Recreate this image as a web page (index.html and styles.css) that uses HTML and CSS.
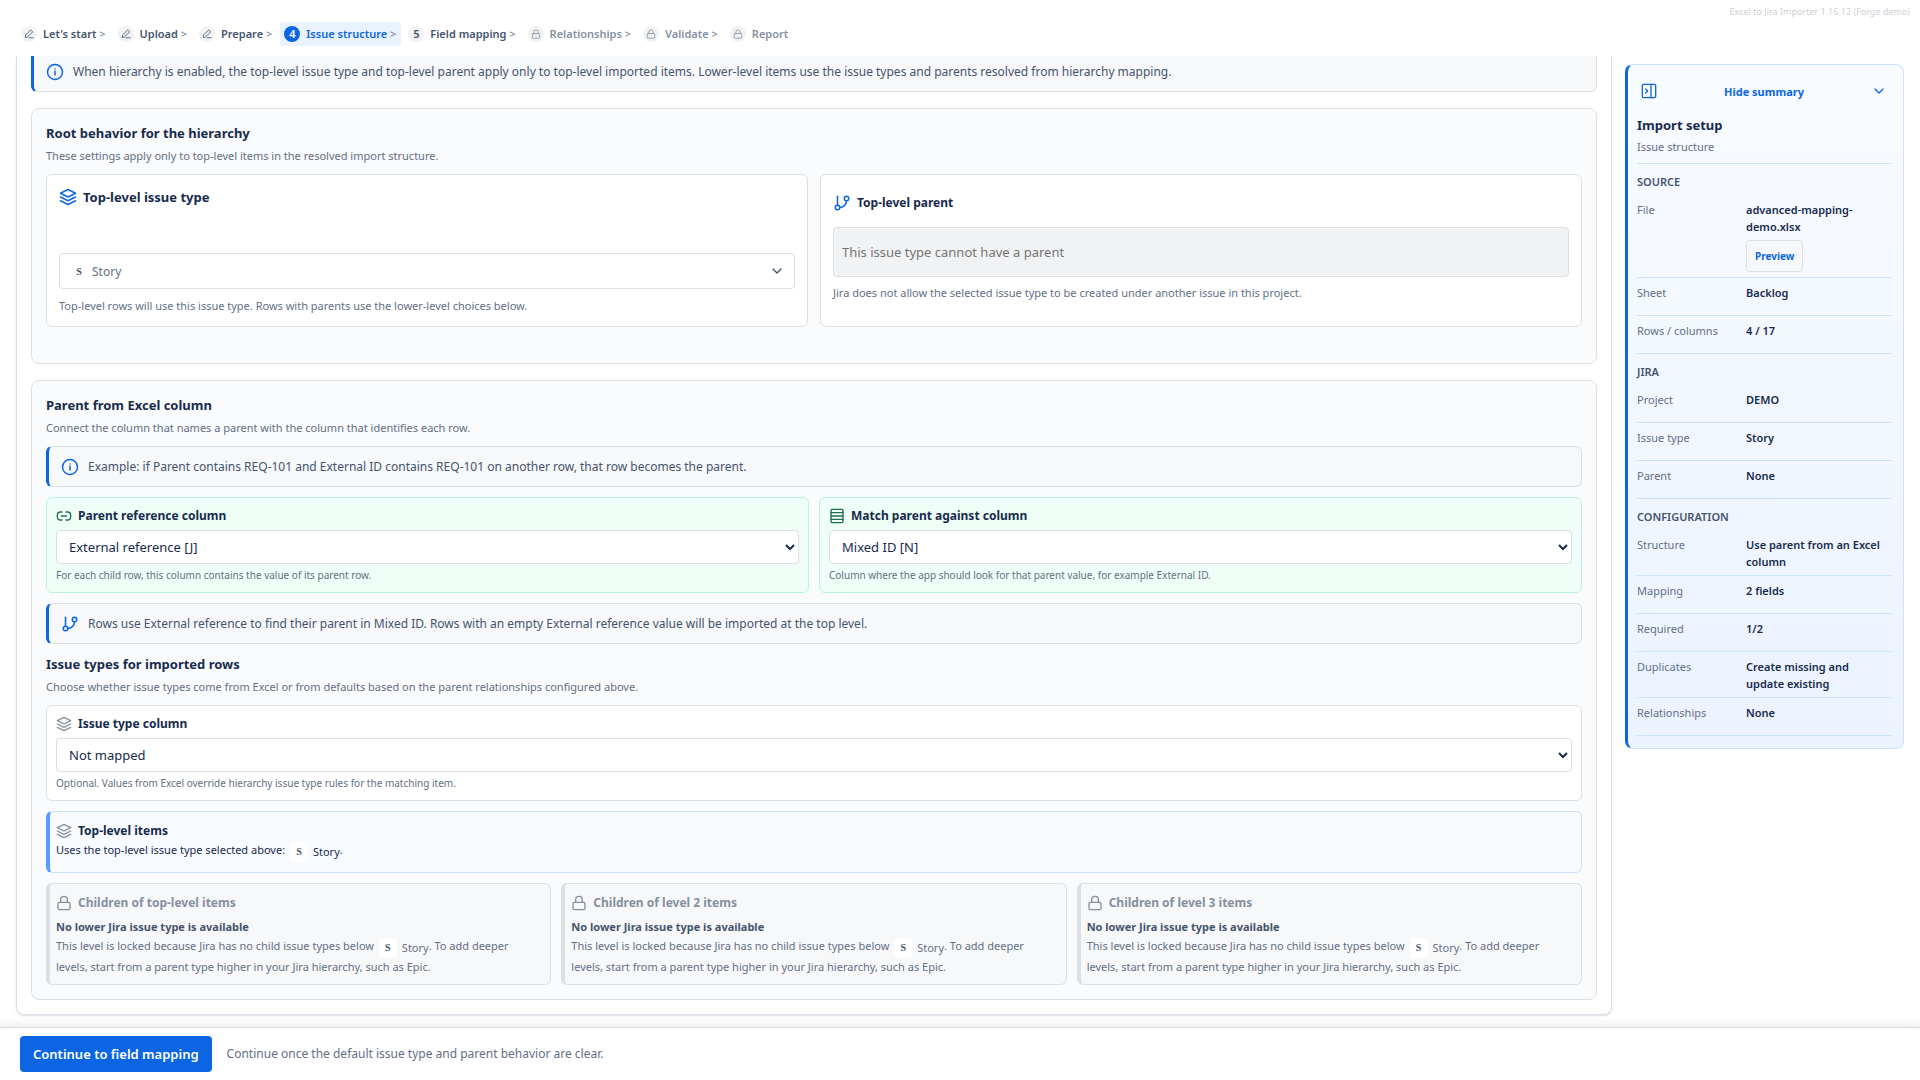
FILE: index.html
```html
<!DOCTYPE html>
<html lang="en">
<head>
    <meta charset="UTF-8">
    <meta name="viewport" content="width=device-width, initial-scale=1.0">
    <title>Excel to Jira Importer</title>
    <link rel="stylesheet" href="styles.css">
</head>
<body>
    <!-- Shared icons -->
    <svg class="sprite" aria-hidden="true">
        <symbol id="i-info" viewBox="0 0 24 24"><circle cx="12" cy="12" r="10"/><path d="M12 16v-5M12 8h.01"/></symbol>
        <symbol id="i-layers" viewBox="0 0 24 24"><path d="M12 2 2 7l10 5 10-5-10-5z"/><path d="m2 12 10 5 10-5"/><path d="m2 17 10 5 10-5"/></symbol>
        <symbol id="i-branch" viewBox="0 0 24 24"><path d="M6 3v12"/><circle cx="18" cy="6" r="3"/><circle cx="6" cy="18" r="3"/><path d="M18 9a9 9 0 0 1-9 9"/></symbol>
        <symbol id="i-lock" viewBox="0 0 24 24"><rect x="3" y="11" width="18" height="11" rx="2"/><path d="M7 11V7a5 5 0 0 1 10 0v4"/></symbol>
        <symbol id="i-link" viewBox="0 0 24 24"><path d="M9 18H7a5 5 0 0 1-5-5v-2a5 5 0 0 1 5-5h2M15 6h2a5 5 0 0 1 5 5v2a5 5 0 0 1-5 5h-2M8 12h8"/></symbol>
        <symbol id="i-rows" viewBox="0 0 24 24"><rect x="3" y="2" width="18" height="20" rx="2"/><path d="M3 7h18M3 12h18M3 17h18"/></symbol>
        <symbol id="i-panel" viewBox="0 0 24 24"><rect x="2" y="2" width="20" height="20" rx="2"/><path d="M15 2v20M7 9l3 3-3 3"/></symbol>
        <symbol id="i-chevron" viewBox="0 0 24 24"><path d="m6 9 6 6 6-6"/></symbol>
        <symbol id="i-pen" viewBox="0 0 24 24"><path d="M12 21h10M17 3l4 4L8 19l-5 2 1-6z"/></symbol>
    </svg>

    <header class="topbar">
        <div class="version">Excel to Jira Importer 1.16.12 (Forge demo)</div>
        <nav class="steps">
            <a href="#" class="step"><span class="dot"><svg><use href="#i-pen"/></svg></span>Let's start <i>&gt;</i></a>
            <a href="#" class="step"><span class="dot"><svg><use href="#i-pen"/></svg></span>Upload <i>&gt;</i></a>
            <a href="#" class="step"><span class="dot"><svg><use href="#i-pen"/></svg></span>Prepare <i>&gt;</i></a>
            <a href="#" class="step active"><span class="dot">4</span>Issue structure <i>&gt;</i></a>
            <a href="#" class="step"><span class="dot">5</span>Field mapping <i>&gt;</i></a>
            <a href="#" class="step locked"><span class="dot"><svg><use href="#i-lock"/></svg></span>Relationships <i>&gt;</i></a>
            <a href="#" class="step locked"><span class="dot"><svg><use href="#i-lock"/></svg></span>Validate <i>&gt;</i></a>
            <a href="#" class="step locked"><span class="dot"><svg><use href="#i-lock"/></svg></span>Report</a>
        </nav>
    </header>

    <div class="workspace">
        <main class="content">
            <div class="notice notice-cut">
                <svg class="icon"><use href="#i-info"/></svg>
                When hierarchy is enabled, the top-level issue type and top-level parent apply only to top-level imported items. Lower-level items use the issue types and parents resolved from hierarchy mapping.
            </div>

            <!-- Root behavior -->
            <section class="panel root-panel">
                <h2>Root behavior for the hierarchy</h2>
                <p class="sub">These settings apply only to top-level items in the resolved import structure.</p>
                <div class="root-grid">
                    <div class="card root-card">
                        <h3><svg class="icon blue"><use href="#i-layers"/></svg>Top-level issue type</h3>
                        <button class="type-select"><span class="avatar">S</span>Story<svg class="icon"><use href="#i-chevron"/></svg></button>
                        <p class="sub">Top-level rows will use this issue type. Rows with parents use the lower-level choices below.</p>
                    </div>
                    <div class="card root-card parent-card">
                        <label for="parent"><svg class="icon blue"><use href="#i-branch"/></svg>Top-level parent</label>
                        <input type="text" id="parent" placeholder="This issue type cannot have a parent" disabled>
                        <p class="sub">Jira does not allow the selected issue type to be created under another issue in this project.</p>
                    </div>
                </div>
            </section>

            <!-- Parent column mapping -->
            <section class="panel mapping-panel">
                <h2>Parent from Excel column</h2>
                <p class="sub">Connect the column that names a parent with the column that identifies each row.</p>
                <div class="stack">
                    <div class="notice">
                        <svg class="icon"><use href="#i-info"/></svg>
                        Example: if Parent contains REQ-101 and External ID contains REQ-101 on another row, that row becomes the parent.
                    </div>
                    <div class="pair-grid">
                        <div class="card field mapped">
                            <label for="ref-column"><svg class="icon"><use href="#i-link"/></svg>Parent reference column</label>
                            <select id="ref-column"><option>External reference [J]</option></select>
                            <p class="help">For each child row, this column contains the value of its parent row.</p>
                        </div>
                        <div class="card field mapped">
                            <label for="match-column"><svg class="icon"><use href="#i-rows"/></svg>Match parent against column</label>
                            <select id="match-column"><option>Mixed ID [N]</option></select>
                            <p class="help">Column where the app should look for that parent value, for example External ID.</p>
                        </div>
                    </div>
                    <div class="notice">
                        <svg class="icon"><use href="#i-branch"/></svg>
                        Rows use External reference to find their parent in Mixed ID. Rows with an empty External reference value will be imported at the top level.
                    </div>
                </div>

                <h2>Issue types for imported rows</h2>
                <p class="sub">Choose whether issue types come from Excel or from defaults based on the parent relationships configured above.</p>
                <div class="stack">
                    <div class="card field">
                        <label for="type-column"><svg class="icon"><use href="#i-layers"/></svg>Issue type column</label>
                        <select id="type-column"><option>Not mapped</option></select>
                        <p class="help">Optional. Values from Excel override hierarchy issue type rules for the matching item.</p>
                    </div>
                    <div class="card level level-top">
                        <h3><svg class="icon"><use href="#i-layers"/></svg>Top-level items</h3>
                        <p>Uses the top-level issue type selected above: <span class="type"><span class="avatar">S</span>Story</span>.</p>
                    </div>
                    <div class="level-grid">
                        <div class="card level level-locked">
                            <h3><svg class="icon"><use href="#i-lock"/></svg>Children of top-level items</h3>
                            <strong>No lower Jira issue type is available</strong>
                            <p>This level is locked because Jira has no child issue types below <span class="type"><span class="avatar">S</span>Story</span>. To add deeper levels, start from a parent type higher in your Jira hierarchy, such as Epic.</p>
                        </div>
                        <div class="card level level-locked">
                            <h3><svg class="icon"><use href="#i-lock"/></svg>Children of level 2 items</h3>
                            <strong>No lower Jira issue type is available</strong>
                            <p>This level is locked because Jira has no child issue types below <span class="type"><span class="avatar">S</span>Story</span>. To add deeper levels, start from a parent type higher in your Jira hierarchy, such as Epic.</p>
                        </div>
                        <div class="card level level-locked">
                            <h3><svg class="icon"><use href="#i-lock"/></svg>Children of level 3 items</h3>
                            <strong>No lower Jira issue type is available</strong>
                            <p>This level is locked because Jira has no child issue types below <span class="type"><span class="avatar">S</span>Story</span>. To add deeper levels, start from a parent type higher in your Jira hierarchy, such as Epic.</p>
                        </div>
                    </div>
                </div>
            </section>
        </main>

        <!-- Import summary -->
        <aside class="summary">
            <button class="summary-toggle">
                <svg class="icon"><use href="#i-panel"/></svg>
                <span>Hide summary</span>
                <svg class="icon"><use href="#i-chevron"/></svg>
            </button>
            <h2>Import setup</h2>
            <p class="summary-step">Issue structure</p>
            <h3>Source</h3>
            <dl>
                <div><dt>File</dt><dd>advanced-mapping-demo.xlsx<button class="preview">Preview</button></dd></div>
                <div><dt>Sheet</dt><dd>Backlog</dd></div>
                <div><dt>Rows / columns</dt><dd>4 / 17</dd></div>
            </dl>
            <h3>Jira</h3>
            <dl>
                <div><dt>Project</dt><dd>DEMO</dd></div>
                <div><dt>Issue type</dt><dd>Story</dd></div>
                <div><dt>Parent</dt><dd>None</dd></div>
            </dl>
            <h3>Configuration</h3>
            <dl>
                <div><dt>Structure</dt><dd>Use parent from an Excel column</dd></div>
                <div><dt>Mapping</dt><dd>2 fields</dd></div>
                <div><dt>Required</dt><dd>1/2</dd></div>
                <div><dt>Duplicates</dt><dd>Create missing and update existing</dd></div>
                <div><dt>Relationships</dt><dd>None</dd></div>
            </dl>
        </aside>
    </div>

    <footer class="actions">
        <button class="primary">Continue to field mapping</button>
        <span>Continue once the default issue type and parent behavior are clear.</span>
    </footer>
</body>
</html>
```
FILE: styles.css
```css
* {
    box-sizing: border-box;
}
body {
    margin: 0;
    min-height: 100vh;
    display: flex;
    flex-direction: column;
    background: #fff;
    color: #172b4d;
    font-family: "Noto Sans", sans-serif;
    font-size: 12px;
    line-height: 20px;
}
h2, h3, p, dl, dd {
    margin: 0;
}
button, input, select {
    font-family: inherit;
}
svg {
    fill: none;
    stroke: currentColor;
    stroke-width: 2;
    stroke-linecap: round;
    stroke-linejoin: round;
}
.sprite {
    display: none;
}
.icon {
    width: 18px;
    height: 18px;
    flex: none;
}
.blue {
    color: #0c66e4;
}

/* Top bar */
.topbar {
    height: 56px;
    padding: 4px 10px 0 17px;
}
.version {
    height: 18px;
    line-height: 16px;
    font-size: 9px;
    text-align: right;
    color: #cdd0d6;
}
.steps {
    display: flex;
    gap: 3px;
}
.step {
    display: flex;
    align-items: center;
    height: 24px;
    padding: 0 5px 0 4px;
    border-radius: 3px;
    color: #44546f;
    font-size: 11px;
    font-weight: 600;
    text-decoration: none;
    white-space: pre;
}
.step i {
    font-style: normal;
    color: #8590a2;
}
.dot {
    display: flex;
    align-items: center;
    justify-content: center;
    width: 16px;
    height: 16px;
    margin-right: 6px;
    border-radius: 50%;
    background: #f1f2f4;
    font-size: 11px;
}
.dot svg {
    width: 10px;
    height: 10px;
}
.step.active {
    background: #e9f2ff;
    color: #0c66e4;
}
.active .dot {
    background: #0c66e4;
    color: #fff;
}
.step.locked {
    color: #8590a2;
}

/* Page columns */
.workspace {
    flex: 1;
    display: flex;
    align-items: flex-start;
    gap: 13px;
    padding: 0 16px 12px;
}
.content {
    flex: 1;
    padding: 0 14px 14px;
    border: 1px solid #dcdfe4;
    border-top: 0;
    border-radius: 0 0 8px 8px;
    box-shadow: 0 1px 2px rgba(9, 30, 66, 0.15);
}
.notice {
    display: flex;
    align-items: center;
    gap: 9px;
    height: 41px;
    padding: 0 12px;
    border: 1px solid #dcdfe4;
    border-left: 3px solid #0c66e4;
    border-radius: 6px;
    background: #f7f8f9;
    color: #44546f;
}
.notice .icon {
    color: #0c66e4;
}
.notice-cut {
    height: 36px;
    padding-bottom: 4px;
    border-top: 0;
    border-radius: 0 0 6px 6px;
}
.panel {
    margin-top: 16px;
    padding: 14px;
    border: 1px solid #dcdfe4;
    border-radius: 8px;
    background: #fafbfc;
}
.root-panel {
    padding-bottom: 36px;
}
.panel h2 {
    font-size: 13px;
    font-weight: 700;
}
.sub {
    margin-top: 3px;
    font-size: 11px;
    color: #626f86;
}
.card {
    border: 1px solid #dcdfe4;
    border-radius: 6px;
    background: #fff;
}
.card h3, .card label {
    display: flex;
    align-items: center;
    gap: 6px;
    font-size: 12px;
    font-weight: 700;
}

/* Top-level cards */
.root-grid {
    display: grid;
    grid-template-columns: 1fr 1fr;
    gap: 12px;
    margin-top: 8px;
}
.root-card {
    height: 153px;
    padding: 12px;
}
.root-card h3 {
    font-size: 13px;
}
.type-select {
    display: flex;
    align-items: center;
    gap: 4px;
    width: 100%;
    height: 36px;
    margin: 46px 0 7px;
    padding: 0 9px 0 10px;
    border: 1px solid #dcdfe4;
    border-radius: 4px;
    background: #fff;
    color: #626f86;
    font-size: 12px;
}
.type-select .icon {
    width: 16px;
    height: 16px;
    margin-left: auto;
    color: #44546f;
}
.avatar {
    display: inline-flex;
    align-items: center;
    justify-content: center;
    width: 18px;
    height: 20px;
    border-radius: 3px;
    background: #fff;
    color: #44546f;
    font-family: "Liberation Serif", serif;
    font-size: 10px;
    font-weight: 700;
}
.parent-card {
    padding-top: 18px;
}
.root-card input {
    display: block;
    width: 100%;
    height: 50px;
    margin: 14px 0 6px;
    padding: 0 8px;
    border: 1px solid #dcdfe4;
    border-radius: 4px;
    background: #f1f2f4;
    font-size: 13px;
}

/* Column mapping */
.stack {
    display: flex;
    flex-direction: column;
    gap: 10px;
    margin: 8px 0 10px;
}
.stack:last-child {
    margin-bottom: 0;
}
.pair-grid {
    display: grid;
    grid-template-columns: 1fr 1fr;
    gap: 10px;
}
.field {
    height: 96px;
    padding: 8px 9px;
}
.field .icon, .level .icon {
    width: 16px;
    height: 16px;
    color: #8590a2;
}
.mapped {
    border-color: #baf3db;
    background: #effff8;
}
.mapped .icon {
    color: #216e4e;
}
.field select {
    display: block;
    width: 100%;
    height: 34px;
    margin: 4px 0 1px;
    padding: 0 8px;
    border: 1px solid #dcdfe4;
    border-radius: 4px;
    background: #fff;
    color: #172b4d;
    font-size: 13px;
}
.help {
    font-size: 10px;
    color: #626f86;
}

/* Hierarchy levels */
.level {
    padding: 9px;
    padding-left: 6px;
    border-left-width: 4px;
    font-size: 11px;
    line-height: 18px;
}
.level h3 {
    line-height: 20px;
}
.level-top {
    height: 62px;
    border-color: #cce0ff;
    border-left-color: #579dff;
    background: #f7faff;
}
.level-grid {
    display: grid;
    grid-template-columns: repeat(3, 1fr);
    gap: 10px;
}
.level-locked {
    height: 102px;
    background: #f7f8f9;
    color: #626f86;
}
.level-locked h3 {
    margin-bottom: 4px;
    color: #8590a2;
}
.level-locked strong {
    display: block;
    line-height: 20px;
    color: #44546f;
}
.type {
    display: inline-flex;
    align-items: center;
    gap: 5px;
    height: 20px;
    margin-left: 2px;
    vertical-align: text-top;
}

/* Summary */
.summary {
    width: 279px;
    margin-top: 8px;
    padding: 10px 12px 12px 9px;
    border: 1px solid #cce0ff;
    border-left: 3px solid #0c66e4;
    border-radius: 8px;
    background: linear-gradient(#f8fbff, #ecf3ff);
}
.summary-toggle {
    display: flex;
    align-items: center;
    justify-content: space-between;
    width: 100%;
    height: 32px;
    padding: 0 4px;
    border: 0;
    background: none;
    color: #0c66e4;
    font-size: 11px;
    font-weight: 700;
}
.summary-toggle .icon {
    width: 16px;
    height: 16px;
}
.summary h2 {
    margin-top: 8px;
    font-size: 13px;
}
.summary-step {
    padding: 2px 0 6px;
    border-bottom: 1px solid #cce0ff;
    font-size: 11px;
    color: #626f86;
}
.summary h3 {
    margin: 8px 0 3px;
    font-size: 11px;
    font-weight: 600;
    text-transform: uppercase;
    color: #44546f;
}
.summary dl div {
    display: grid;
    grid-template-columns: 101px 1fr;
    gap: 8px;
    min-height: 38px;
    padding: 6px 0 5px;
    border-bottom: 1px solid #cce0ff;
    font-size: 11px;
    line-height: 17px;
}
.summary dt {
    color: #626f86;
}
.summary dd {
    padding-right: 6px;
    font-weight: 600;
}
.preview {
    display: block;
    height: 32px;
    margin-top: 5px;
    padding: 0 8px;
    border: 1px solid #dcdfe4;
    border-radius: 4px;
    background: #f7f8f9;
    color: #0c66e4;
    font-size: 10px;
    font-weight: 700;
}

/* Bottom bar */
.actions {
    position: sticky;
    bottom: 0;
    display: flex;
    align-items: center;
    gap: 15px;
    height: 53px;
    padding: 0 20px;
    border-top: 1px solid #dcdfe4;
    background: #fff;
    box-shadow: 0 -3px 8px rgba(9, 30, 66, 0.08);
    color: #626f86;
}
.primary {
    height: 36px;
    padding: 0 13px;
    border: 0;
    border-radius: 4px;
    background: #0c66e4;
    color: #fff;
    font-size: 13px;
    font-weight: 600;
}
```
